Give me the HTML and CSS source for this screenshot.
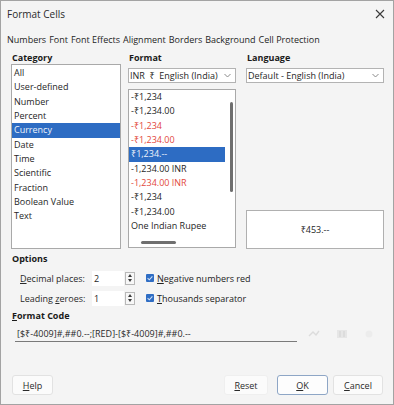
FILE: index.html
```html
<!DOCTYPE html>
<html>
<head>
<meta charset="utf-8">
<link rel="stylesheet" href="styles.css">
</head>
<body>
<div class="dialog">
  <div class="titlebar">
    <span class="title">Format Cells</span>
    <svg class="close" width="10" height="10" viewBox="0 0 10 10"><path d="M1 1L9 9M9 1L1 9" stroke="#3a3a3a" stroke-width="1.1" fill="none"/></svg>
  </div>
  <div class="tabs">
    <span>Numbers</span><span>Font</span><span>Font Effects</span><span>Alignment</span><span>Borders</span><span>Background</span><span>Cell Protection</span>
  </div>
  <div class="main">
    <div class="col cat">
      <div class="hdr">Category</div>
      <div class="listbox catlist">
        <div class="item">All</div>
        <div class="item">User-defined</div>
        <div class="item">Number</div>
        <div class="item">Percent</div>
        <div class="item sel">Currency</div>
        <div class="item">Date</div>
        <div class="item">Time</div>
        <div class="item">Scientific</div>
        <div class="item">Fraction</div>
        <div class="item">Boolean Value</div>
        <div class="item">Text</div>
      </div>
    </div>
    <div class="col fmt">
      <div class="hdr">Format</div>
      <div class="select"><span>INR&nbsp;&nbsp;₹&nbsp;&nbsp;English (India)</span><svg width="7" height="5" viewBox="0 0 7 5"><path d="M0.5 1L3.5 4L6.5 1" stroke="#8a8a8a" fill="none"/></svg></div>
      <div class="listbox fmtlist">
        <div class="fitems">
          <div class="item">-₹1,234</div>
          <div class="item">-₹1,234.00</div>
          <div class="item red">-₹1,234</div>
          <div class="item red">-₹1,234.00</div>
          <div class="item sel">₹1,234.--</div>
          <div class="item">-1,234.00 INR</div>
          <div class="item red">-1,234.00 INR</div>
          <div class="item">-₹1,234</div>
          <div class="item">-₹1,234.00</div>
          <div class="item">One Indian Rupee</div>
        </div>
        <div class="vthumb"></div>
        <div class="hthumb"></div>
      </div>
    </div>
    <div class="col lang">
      <div class="hdr">Language</div>
      <div class="select"><span>Default - English (India)</span><svg width="7" height="5" viewBox="0 0 7 5"><path d="M0.5 1L3.5 4L6.5 1" stroke="#8a8a8a" fill="none"/></svg></div>
      <div class="preview">₹453.--</div>
    </div>
  </div>
  <div class="options">
    <div class="hdr ohdr">Options</div>
    <div class="optrow">
      <span class="olabel"><u>D</u>ecimal places:</span>
      <span class="num">2</span>
      <span class="spin"><span class="up"></span><span class="dn"></span></span>
      <span class="check"><svg width="8" height="8" viewBox="0 0 8 8"><path d="M1.6 4.2L3.3 5.8L6.4 2.3" stroke="#cfe0f7" stroke-width="1.1" fill="none"/></svg></span>
      <span class="clabel"><u>N</u>egative numbers red</span>
    </div>
    <div class="optrow">
      <span class="olabel">Leading <u>z</u>eroes:</span>
      <span class="num">1</span>
      <span class="spin"><span class="up"></span><span class="dn"></span></span>
      <span class="check"><svg width="8" height="8" viewBox="0 0 8 8"><path d="M1.6 4.2L3.3 5.8L6.4 2.3" stroke="#cfe0f7" stroke-width="1.1" fill="none"/></svg></span>
      <span class="clabel"><u>T</u>housands separator</span>
    </div>
    <div class="hdr chdr"><u>F</u>ormat Code</div>
    <div class="coderow">
      <div class="codefield">[$₹-4009]#,##0.--;[RED]-[$₹-4009]#,##0.--</div>
      <div class="cicons">
        <svg width="12" height="10" viewBox="0 0 12 10"><path d="M1 7L5 3L8 6L11 2" stroke="#dcdcdc" stroke-width="1.4" fill="none"/></svg>
        <svg width="12" height="10" viewBox="0 0 12 10"><rect x="1" y="1" width="10" height="8" fill="#e6e6e6"/><path d="M4 2V8M8 2V8" stroke="#d2d2d2"/></svg>
        <svg width="10" height="10" viewBox="0 0 10 10"><circle cx="5" cy="5" r="3.5" fill="#ececec"/></svg>
      </div>
    </div>
  </div>
  <div class="buttons">
    <span class="btn help"><u>H</u>elp</span>
    <span class="spacer"></span>
    <span class="btn reset"><u>R</u>eset</span>
    <span class="btn ok"><u>O</u>K</span>
    <span class="btn cancel"><u>C</u>ancel</span>
  </div>
</div>
</body>
</html>
```

FILE: styles.css
```css
html, body {
  margin: 0;
  padding: 0;
  background: #f3f3f3;
}

.dialog {
  width: 394px;
  height: 405px;
  box-sizing: border-box;
  border: 1px solid #a3a3a3;
  background: #f4f4f4;
  display: flex;
  flex-direction: column;
  font-family: "Open Sans", "Noto Sans", "DejaVu Sans", sans-serif;
  font-size: 9px;
  color: #262626;
}

.titlebar {
  height: 26px;
  display: flex;
  align-items: center;
  justify-content: space-between;
  padding: 0 8px 0 6px;
  font-size: 10px;
  color: #2a2a2a;
}

.tabs {
  height: 24px;
  display: flex;
  align-items: center;
  gap: 3px;
  padding-left: 6px;
  color: #1e1e1e;
}

.main {
  display: flex;
  height: 198px;
  padding-left: 10px;
}

.col {
  display: flex;
  flex-direction: column;
}

.cat { width: 110px; }
.fmt { width: 108px; margin-left: 7px; }
.lang { width: 138px; margin-left: 10px; }

.hdr {
  height: 13px;
  line-height: 13px;
  font-weight: 700;
  padding-left: 1px;
  color: #1a1a1a;
}

.listbox {
  background: #fff;
  border: 1px solid #a9a9a9;
  box-sizing: border-box;
}

.catlist {
  height: 185px;
  padding-top: 1px;
}

.item {
  height: 14.35px;
  line-height: 14.35px;
  padding-left: 2px;
  white-space: nowrap;
}

.item.sel {
  background: #2d6cc3;
  color: #eef3fb;
}

.item.red {
  color: #e2483c;
}

.select {
  margin-top: 4px;
  height: 15px;
  box-sizing: border-box;
  background: #fff;
  border: 1px solid #b3b3b3;
  display: flex;
  align-items: center;
  justify-content: space-between;
  padding: 0 4px 0 1px;
  white-space: nowrap;
}

.fmtlist {
  margin-top: 6px;
  height: 159px;
  position: relative;
  padding-top: 0;
}

.fitems {
  width: 96px;
}

.vthumb {
  position: absolute;
  left: 101px;
  top: 12px;
  width: 3px;
  height: 90px;
  background: #6f6f6f;
  border-radius: 2px;
}

.hthumb {
  position: absolute;
  left: 12px;
  top: 151px;
  width: 35px;
  height: 3px;
  background: #6f6f6f;
  border-radius: 2px;
}

.preview {
  margin-top: auto;
  height: 39px;
  box-sizing: border-box;
  background: #fff;
  border: 1px solid #b0b0b0;
  display: flex;
  align-items: center;
  justify-content: center;
}

.options {
  padding-left: 10px;
  display: flex;
  flex-direction: column;
}

.ohdr {
  margin-top: 3px;
  height: 14px;
  line-height: 14px;
}

.optrow {
  height: 20px;
  display: flex;
  align-items: center;
  padding-left: 9px;
}

.ohdr + .optrow { margin-top: 2px; }

.olabel {
  width: 72px;
  color: #2a2a2a;
}

.num {
  width: 32px;
  height: 15px;
  line-height: 15px;
  box-sizing: border-box;
  background: #fff;
  padding-left: 2px;
}

.spin {
  margin-left: 1px;
  width: 10px;
  height: 13px;
  box-sizing: border-box;
  border: 1px solid #b8b8b8;
  background: #f7f7f7;
  display: flex;
  flex-direction: column;
  align-items: center;
  justify-content: space-around;
}

.spin .up {
  width: 0;
  height: 0;
  border-left: 2.5px solid transparent;
  border-right: 2.5px solid transparent;
  border-bottom: 3px solid #3c3c3c;
}

.spin .dn {
  width: 0;
  height: 0;
  border-left: 2.5px solid transparent;
  border-right: 2.5px solid transparent;
  border-top: 3px solid #3c3c3c;
}

.check {
  margin-left: 11px;
  width: 8px;
  height: 8px;
  background: #2f6dc4;
  border-radius: 1px;
  display: flex;
}

.clabel {
  margin-left: 3px;
  color: #222;
}

.chdr {
  height: 13px;
  line-height: 13px;
  margin-top: 1px;
}

.coderow {
  display: flex;
  align-items: center;
  margin-top: 4px;
  padding-left: 4px;
}

.codefield {
  width: 282px;
  height: 16px;
  line-height: 16px;
  box-sizing: border-box;
  border-bottom: 1px solid #7a7a7a;
  padding-left: 2px;
  color: #2a2a2a;
  white-space: nowrap;
}

.cicons {
  display: flex;
  align-items: center;
  margin-left: 11px;
  gap: 16px;
}

.buttons {
  margin-top: auto;
  display: flex;
  align-items: center;
  padding: 0 10px 9px 11px;
}

.spacer { flex: 1; }

.btn {
  height: 20px;
  box-sizing: border-box;
  display: flex;
  align-items: center;
  justify-content: center;
  background: #fbfbfb;
  border: 1px solid #e2e2e2;
  border-radius: 3px;
  color: #2a2a2a;
}

.help { width: 41px; }
.reset { width: 44px; margin-right: 9px; border-color: #efefef; }
.ok { width: 51px; margin-right: 5px; border-color: #8ea6c6; background: #fdfdfd; }
.cancel { width: 50px; }
```
